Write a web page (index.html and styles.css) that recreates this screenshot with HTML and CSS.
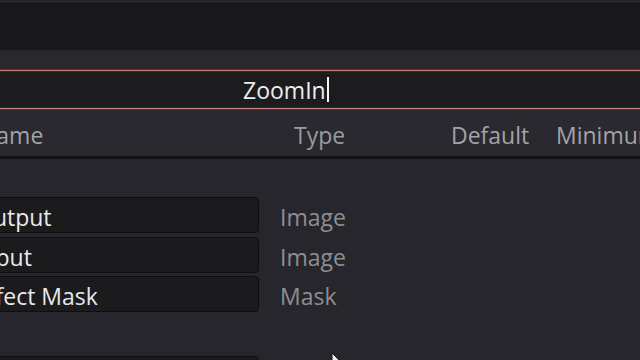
FILE: index.html
```html
<!DOCTYPE html>
<html lang="en">

<head>
  <meta charset="UTF-8" />
  <title>Macro Editor</title>
  <meta name="viewport" content="width=device-width, initial-scale=1.0" />
  <link rel="stylesheet" href="styles.css">
</head>

<body>

  <div class="panel">
    <!-- top toolbar area -->
    <div class="top-strip"></div>
    <div class="toolbar"></div>

    <!-- macro name field -->
    <div class="name-band">
      <div class="name-field">
        <span class="name-text">ZoomIn</span><span class="caret"></span>
      </div>
    </div>

    <!-- column headers -->
    <div class="thead">
      <div class="th th-name">Name</div>
      <div class="th th-type">Type</div>
      <div class="th">Default</div>
      <div class="th">Minimum</div>
    </div>

    <!-- inputs / outputs -->
    <div class="rows">
      <div class="row">
        <div class="field">Output</div>
        <div class="type">Image</div>
      </div>
      <div class="row">
        <div class="field">Input</div>
        <div class="type">Image</div>
      </div>
      <div class="row">
        <div class="field">Effect Mask</div>
        <div class="type">Mask</div>
      </div>
      <div class="row row-group">
        <div class="field"></div>
        <div class="type"></div>
      </div>
    </div>

    <!-- mouse pointer -->
    <svg class="pointer" width="14" height="20" viewBox="0 0 14 20">
      <path d="M1 1 L1 16 L4.5 12.5 L7 18 L9 17 L6.5 11.5 L11.5 11.5 Z" fill="#f2f2f2" stroke="#111" stroke-width="1" />
    </svg>
  </div>

</body>

</html>
```

FILE: styles.css
```css
:root {
  --bg: #26262c;
  --head: #29292f;
  --dark: #18181b;
  --field: #1b1b1d;
  --line: #111113;
  --text: #e8e8ea;
  --muted: #8e8e93;
  --red: #c47c7c;
}

body {
  margin: 0;
  width: 640px;
  height: 360px;
  overflow: hidden;
  background-color: var(--bg);
  font-family: 'Open Sans', 'Noto Sans', sans-serif;
  color: var(--text);
}

.panel {
  position: relative;
  height: 360px;
  overflow: hidden;
}

.top-strip {
  height: 3px;
  background-color: #25252a;
  border-bottom: 1px solid #0f0f11;
}

.toolbar {
  height: 46px;
  background-color: var(--dark);
}

.name-band {
  padding-top: 20px;
  background-color: #28282d;
}

.name-field {
  height: 37px;
  background-color: #1c1c1e;
  border-top: 1px solid var(--red);
  border-bottom: 1px solid var(--red);
  box-shadow: 0 -1px 0 #6a2a2a, 0 1px 0 #6a2a2a, 0 -2px 0 #3e2224, 0 2px 0 #3e2224, inset 0 1px 0 #4a1e1e, inset 0 -1px 0 #4a1e1e;
  display: flex;
  align-items: center;
  padding-left: 243px;
  font-size: 23px;
  color: #ededed;
}

.caret {
  display: inline-block;
  width: 2px;
  height: 25px;
  margin-left: 1px;
  background-color: #f4f4f4;
}

.thead {
  display: grid;
  grid-template-columns: 285px 192px 105px 1fr;
  margin-left: -26px;
  margin-top: 1px;
  height: 49px;
  padding-top: 3px;
  box-sizing: border-box;
  align-items: center;
  background-color: var(--head);
  border-bottom: 3px solid var(--line);
  font-size: 23px;
  color: #a2a2a7;
  white-space: nowrap;
}

.th-name {
  padding-left: 5px;
}

.th-type {
  padding-left: 35px;
  color: #9b9ba0;
}

.rows {
  padding-top: 38px;
  margin-left: -34px;
  display: flex;
  flex-direction: column;
  gap: 3.5px;
}

.row {
  display: grid;
  grid-template-columns: 293px 1fr;
  column-gap: 21px;
  align-items: center;
}

.row-group {
  margin-top: 40px;
}

.field {
  box-sizing: border-box;
  height: 36px;
  line-height: 33px;
  padding-top: 3px;
  padding-left: 8px;
  background-color: var(--field);
  border: 1.5px solid #0e0e10;
  border-radius: 4px;
  font-size: 23px;
  font-weight: 500;
  color: var(--text);
  white-space: nowrap;
}

.type {
  padding-top: 4px;
  font-size: 23px;
  color: var(--muted);
}

.pointer {
  position: absolute;
  left: 331px;
  top: 352px;
}
```
